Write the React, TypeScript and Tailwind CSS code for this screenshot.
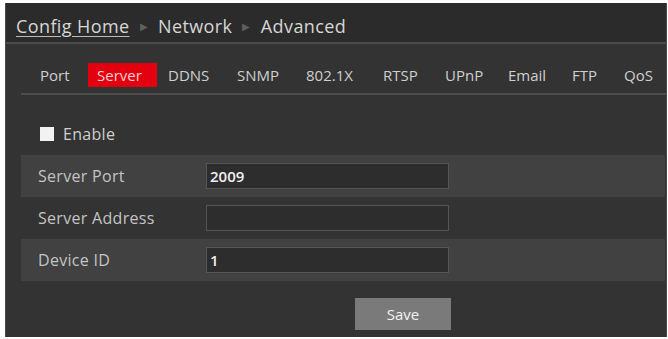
import React from 'react';

// left padding and box width for each tab, taken from the reference positions
const tabs: { name: string; pl: number; w: number }[] = [
  { name: 'Port', pl: 9, w: 57 },
  { name: 'Server', pl: 9, w: 69 },
  { name: 'DDNS', pl: 11, w: 71 },
  { name: 'SNMP', pl: 9, w: 69 },
  { name: '802.1X', pl: 9, w: 77 },
  { name: 'RTSP', pl: 9, w: 62 },
  { name: 'UPnP', pl: 9, w: 63 },
  { name: 'Email', pl: 9, w: 64 },
  { name: 'FTP', pl: 9, w: 52 },
  { name: 'QoS', pl: 9, w: 45 },
];

type Row = { label: string; value: string; shaded: boolean };

const rows: Row[] = [
  { label: 'Server Port', value: '2009', shaded: true },
  { label: 'Server Address', value: '', shaded: false },
  { label: 'Device ID', value: '1', shaded: true },
];

function Sep() {
  return <span className="mx-[10px] text-[10px] text-[#5e5e5e]">&#9654;</span>;
}

export default function App() {
  return (
    <div
      className="w-[668px] h-[339px] bg-white pl-[5px] pt-[3px] pb-[2px] pr-[1px]"
      style={{ fontFamily: '"Open Sans", "Liberation Sans", sans-serif' }}
    >
      <div className="h-full flex flex-col bg-[#333333] border-l border-r border-[#4a4a4a]">
        {/* Breadcrumb */}
        <div className="h-[41px] shrink-0 flex items-center pl-[10px] pt-[8px] bg-[#2b2b2b] border-b-2 border-[#4b4b4b] text-[18px] tracking-[0.4px] text-[#d6d6d6]">
          <span className="underline underline-offset-[3px] decoration-[#bbbbbb]">Config Home</span>
          <Sep />
          <span>Network</span>
          <Sep />
          <span>Advanced</span>
        </div>

        {/* Tabs */}
        <div className="ml-[15px] mt-[19px] h-[32px] flex items-start pl-[10px] border-b-2 border-[#4d4d4d]">
          {tabs.map((t) => (
            <div
              key={t.name}
              style={{ width: t.w, paddingLeft: t.pl }}
              className={`h-[24px] shrink-0 flex items-center text-[15px] whitespace-nowrap ${
                t.name === 'Server' ? 'bg-[#e3000f] text-[#f3d0d0]' : 'text-[#cfcfcf]'
              }`}
            >
              {t.name}
            </div>
          ))}
        </div>

        {/* Enable */}
        <div className="mt-[27px] ml-[34px] flex items-center gap-[9px] text-[16px] tracking-[0.3px] text-[#cfcfcf]">
          <span className="w-[14px] h-[14px] bg-[#f2f2f2]" />
          <span>Enable</span>
        </div>

        {/* Fields */}
        <div className="mt-[9px] ml-[15px] mr-[1px] flex flex-col">
          {rows.map((r) => (
            <div
              key={r.label}
              className={`h-[42px] flex items-center ${r.shaded ? 'bg-[#414141]' : 'bg-[#333333]'}`}
            >
              <div className="w-[185px] pl-[17px] text-[16px] tracking-[0.3px] text-[#c4c4c4]">{r.label}</div>
              <div className="w-[243px] h-[26px] flex items-center px-[3px] bg-[#2d2d2d] border border-[#555555] text-[15px] font-semibold text-[#f0f0f0]">
                {r.value}
              </div>
            </div>
          ))}
        </div>

        {/* Save */}
        <div className="mt-[17px] flex">
          <button className="ml-[349px] w-[96px] h-[32px] bg-[#7a7a7a] text-[15px] font-medium text-[#f2f2f2]">
            Save
          </button>
        </div>
      </div>
    </div>
  );
}
